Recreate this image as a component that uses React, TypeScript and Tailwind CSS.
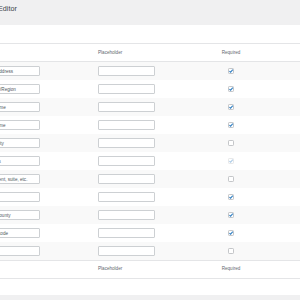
import React from 'react';

type Field = {
  label: string;
  required: boolean;
  locked?: boolean;
};

const fields: Field[] = [
  { label: 'Email address', required: true },
  { label: 'Country/Region', required: true },
  { label: 'First name', required: true },
  { label: 'Last name', required: true },
  { label: 'Town/City', required: false },
  { label: 'Address', required: true, locked: true },
  { label: 'Apartment, suite, etc.', required: false },
  { label: '', required: true },
  { label: 'State/County', required: true },
  { label: 'Postal code', required: true },
  { label: '', required: false },
];

const Check: React.FC<{ checked: boolean; locked?: boolean }> = ({ checked, locked }) => (
  <svg width="6" height="6" viewBox="0 0 6 6" className={locked ? 'opacity-40' : ''}>
    <rect x="0.5" y="0.5" width="5" height="5" rx="0.8" fill="#fff" stroke="#b5b8bb" strokeWidth="0.8" />
    {checked && <path d="M1.4 3.1 L2.6 4.2 L4.8 1.6" fill="none" stroke="#3582c4" strokeWidth="1.1" />}
  </svg>
);

const HeadRow: React.FC<{ top?: boolean }> = ({ top }) => (
  <div
    className={`grid grid-cols-[98px_102px_62px_1fr] h-[17px] items-center text-[4.6px] text-[#646970] ${top ? 'pt-[2px]' : ''}`}
  >
    <div />
    <div>Placeholder</div>
    <div className="text-center">Required</div>
    <div />
  </div>
);

const App: React.FC = () => {
  return (
    <div className="w-[300px] h-[300px] overflow-hidden bg-[#f0f0f1] font-['Liberation_Sans',Arial,sans-serif]">
      {/* page title */}
      <div className="h-[25px] pt-[4px]">
        <h1 className="-ml-[2px] text-[7.2px] leading-[10px] text-[#3c434a]">Editor</h1>
      </div>

      <div className="bg-white h-[270px] pt-[18px]">
        <div className="border-t border-b border-[#e4e5e7]">
          <HeadRow top />
        </div>

        {fields.map((f, i) => (
          <div
            key={i}
            className={`grid grid-cols-[98px_102px_62px_1fr] h-[18px] items-center ${i % 2 === 0 ? 'bg-[#f9f9f9]' : 'bg-white'}`}
          >
            <div>
              <input
                type="text"
                readOnly
                value={f.label}
                className="block -ml-[19px] w-[59px] h-[10px] px-[2px] border border-[#cdd0d3] rounded-[1px] bg-white text-[4.6px] text-[#50575e] outline-none"
              />
            </div>
            <div>
              <input
                type="text"
                readOnly
                value=""
                className="block w-[57px] h-[10px] px-[2px] border border-[#cdd0d3] rounded-[1px] bg-white text-[4.6px] outline-none"
              />
            </div>
            <div className="flex justify-center">
              <Check checked={f.required} locked={f.locked} />
            </div>
            <div />
          </div>
        ))}

        <div className="border-t border-b border-[#e4e5e7]">
          <HeadRow />
        </div>
      </div>
    </div>
  );
};

export default App;
